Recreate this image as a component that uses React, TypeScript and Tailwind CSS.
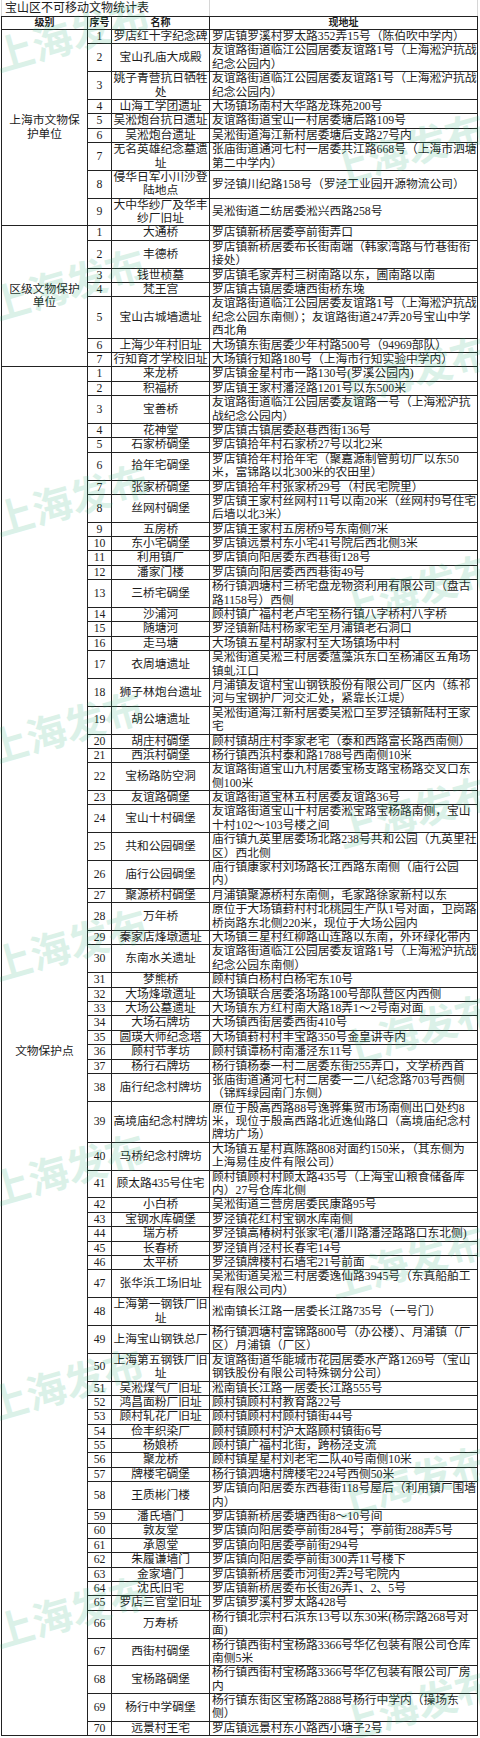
import React from "react";

type Row = [string, string];

const s1: Row[] = [
  ["罗店红十字纪念碑", "罗店镇罗溪村罗太路352弄15号（陈伯吹中学内）"],
  ["宝山孔庙大成殿", "友谊路街道临江公园居委友谊路1号（上海淞沪抗战\n纪念公园内）"],
  ["姚子青营抗日牺牲\n处", "友谊路街道临江公园居委友谊路1号（上海淞沪抗战\n纪念公园内）"],
  ["山海工学团遗址", "大场镇场南村大华路龙珠苑200号"],
  ["吴淞炮台抗日遗址", "友谊路街道宝山一村居委塘后路109号"],
  ["吴淞炮台遗址", "吴淞街道海江新村居委塘后支路27号内"],
  ["无名英雄纪念墓遗\n址", "张庙街道通河七村一居委共江路668号（上海市泗塘\n第二中学内）"],
  ["侵华日军小川沙登\n陆地点", "罗泾镇川纪路158号（罗泾工业园开源物流公司）"],
  ["大中华纱厂及华丰\n纱厂旧址", "吴淞街道二纺居委淞兴西路258号"],
];

const s2: Row[] = [
  ["大通桥", "罗店镇新桥居委亭前街弄口"],
  ["丰德桥", "罗店镇新桥居委布长街南端（韩家湾路与竹巷街衔\n接处）"],
  ["钱世桢墓", "罗店镇毛家弄村三树南路以东，圃南路以南"],
  ["梵王宫", "罗店镇古镇居委塘西街桥东堍"],
  ["宝山古城墙遗址", "友谊路街道临江公园居委友谊路1号（上海淞沪抗战\n纪念公园东南侧）；友谊路街道247弄20号宝山中学\n西北角"],
  ["上海少年村旧址", "大场镇东街居委少年村路500号（94969部队）"],
  ["行知育才学校旧址", "大场镇行知路180号（上海市行知实验中学内）"],
];

const s3: Row[] = [
  ["来龙桥", "罗店镇金星村市一路130号(罗溪公园内)"],
  ["积福桥", "罗店镇王家村潘泾路1201号以东500米"],
  ["宝善桥", "友谊路街道临江公园居委友谊路一号（上海淞沪抗\n战纪念公园内）"],
  ["花神堂", "罗店镇古镇居委赵巷西街136号"],
  ["石家桥碉堡", "罗店镇拾年村石家桥27号以北2米"],
  ["拾年宅碉堡", "罗店镇拾年村拾年宅（聚嘉源制管剪切厂以东50\n米，富锦路以北300米的农田里）"],
  ["张家桥碉堡", "罗店镇拾年村张家桥29号（村民宅院里）"],
  ["丝网村碉堡", "罗店镇王家村丝网村11号以南20米（丝网村9号住宅\n后墙以北3米）"],
  ["五房桥", "罗店镇王家村五房桥9号东南侧7米"],
  ["东小宅碉堡", "罗店镇远景村东小宅41号院后西北侧3米"],
  ["利用镇厂", "罗店镇向阳居委东西巷街128号"],
  ["潘家门楼", "罗店镇向阳居委西西巷街49号"],
  ["三桥宅碉堡", "杨行镇泗塘村三桥宅盘龙物资利用有限公司（盘古\n路1158号）西侧"],
  ["沙浦河", "顾村镇广福村老卢宅至杨行镇八字桥村八字桥"],
  ["随塘河", "罗泾镇新陆村杨家宅至月浦镇老石洞口"],
  ["走马塘", "大场镇五星村胡家村至大场镇场中村"],
  ["衣周塘遗址", "吴淞街道吴淞三村居委蕰藻浜东口至杨浦区五角场\n镇虬江口"],
  ["狮子林炮台遗址", "月浦镇友谊村宝山钢铁股份有限公司厂区内（练祁\n河与宝钢护厂河交汇处，紧靠长江堤）"],
  ["胡公塘遗址", "吴淞街道海江新村居委吴淞口至罗泾镇新陆村王家\n宅"],
  ["胡庄村碉堡", "顾村镇胡庄村李家老宅（泰和西路富长路西南侧）"],
  ["西浜村碉堡", "杨行镇西浜村泰和路1788号西南侧10米"],
  ["宝杨路防空洞", "友谊路街道宝山九村居委宝杨支路宝杨路交叉口东\n侧100米"],
  ["友谊路碉堡", "友谊路街道宝林五村居委友谊路36号"],
  ["宝山十村碉堡", "友谊路街道宝山十村居委淞宝路宝杨路南侧，宝山\n十村102～103号楼之间"],
  ["共和公园碉堡", "庙行镇九英里居委场北路238号共和公园（九英里社\n区）西北侧"],
  ["庙行公园碉堡", "庙行镇康家村刘场路长江西路东南侧（庙行公园\n内）"],
  ["聚源桥村碉堡", "月浦镇聚源桥村东南侧，毛家路徐家新村以东"],
  ["万年桥", "原位于大场镇葑村村北桃园生产队1号对面，卫岗路\n桥岗路东北侧220米，现位于大场公园内"],
  ["秦家店烽墩遗址", "大场镇三星村红柳路山连路以东南，外环绿化带内"],
  ["东南水关遗址", "友谊路街道临江公园居委友谊路1号（上海淞沪抗战\n纪念公园东南侧）"],
  ["梦熊桥", "顾村镇白杨村白杨宅东10号"],
  ["大场烽墩遗址", "大场镇联合居委洛场路100号部队营区内西侧"],
  ["大场公墓遗址", "大场镇东方红村南大路18弄1～2号南对面"],
  ["大场石牌坊", "大场镇西街居委西街410号"],
  ["圆瑛大师纪念塔", "大场镇葑村村丰宝路350号金皇讲寺内"],
  ["顾村节孝坊", "顾村镇谭杨村南潘泾东11号"],
  ["杨行石牌坊", "杨行镇杨泰一村二居委东街255弄口，文学桥西首"],
  ["庙行纪念村牌坊", "张庙街道通河七村二居委一二八纪念路703号西侧\n（锦辉绿园南门东侧）"],
  ["高境庙纪念村牌坊", "原位于殷高西路88号逸骅集贸市场南侧出口处约8\n米，现位于殷高西路北近逸仙路口（高境庙纪念村\n牌坊广场）"],
  ["马桥纪念村牌坊", "大场镇五星村真陈路808对面约150米，（其东侧为\n上海易佳皮件有限公司）"],
  ["顾太路435号住宅", "顾村镇顾村村顾太路435号（上海宝山粮食储备库\n内）27号仓库北侧"],
  ["小白桥", "吴淞街道三营房居委民康路95号"],
  ["宝钢水库碉堡", "罗泾镇花红村宝钢水库南侧"],
  ["瑞方桥", "罗泾镇高椿树村张家宅(潘川路潘泾路路口东北侧)"],
  ["长春桥", "罗泾镇肖泾村长春宅14号"],
  ["太平桥", "罗泾镇牌楼村石墙宅21号前面"],
  ["张华浜工场旧址", "吴淞街道吴淞三村居委逸仙路3945号（东真船舶工\n程有限公司内）"],
  ["上海第一钢铁厂旧\n址", "淞南镇长江路一居委长江路735号（一号门）"],
  ["上海宝山钢铁总厂", "杨行镇泗塘村富锦路800号（办公楼）、月浦镇（厂\n区）月浦镇（厂区）"],
  ["上海第五钢铁厂旧\n址", "友谊路街道华能城市花园居委水产路1269号（宝山\n钢铁股份有限公司特殊钢分公司）"],
  ["吴淞煤气厂旧址", "淞南镇长江路一居委长江路555号"],
  ["鸿昌面粉厂旧址", "顾村镇顾村村教育路22号"],
  ["顾村轧花厂旧址", "顾村镇顾村村顾村镇街44号"],
  ["俭丰织染厂", "顾村镇顾村村沪太路顾村镇街6号"],
  ["杨娘桥", "顾村镇广福村北街，跨杨泾支流"],
  ["聚龙桥", "顾村镇星星村刘老宅二队40号南侧10米"],
  ["牌楼宅碉堡", "杨行镇泗塘村牌楼宅224号西侧50米"],
  ["王质彬门楼", "罗店镇向阳居委东西巷街118号屋后（利用镇厂围墙\n内）"],
  ["潘氏墙门", "罗店镇新桥居委塘西街8～10号间"],
  ["敦友堂", "罗店镇向阳居委亭前街284号；亭前街288弄5号"],
  ["承恩堂", "罗店镇向阳居委亭前街294号"],
  ["朱履谦墙门", "罗店镇向阳居委亭前街300弄11号楼下"],
  ["金家墙门", "罗店镇新桥居委市河街2弄2号宅院内"],
  ["沈氏旧宅", "罗店镇新桥居委布长街26弄1、2、5号"],
  ["罗店三官堂旧址", "罗店镇罗溪村罗太路428号"],
  ["万寿桥", "杨行镇北宗村石浜东13号以东30米(杨宗路268号对\n面)"],
  ["西街村碉堡", "杨行镇西街村宝杨路3366号华亿包装有限公司仓库\n南侧5米"],
  ["宝杨路碉堡", "杨行镇西街村宝杨路3366号华亿包装有限公司厂房\n内"],
  ["杨行中学碉堡", "杨行镇东街区宝杨路2888号杨行中学内（操场东\n侧）"],
  ["远景村王宅", "罗店镇远景村东小路西小塘子2号"],
];

const sections: { label: string; rows: Row[] }[] = [
  { label: "上海市文物保\n护单位", rows: s1 },
  { label: "区级文物保护\n单位", rows: s2 },
  { label: "文物保护点", rows: s3 },
];

const cell = "border border-[#222] p-0 align-middle whitespace-nowrap";

function Lines({ text }: { text: string }) {
  return (
    <>
      {text.split("\n").map((l, i) => (
        <div key={i} className="h-[13.4px] leading-[13.4px] overflow-visible">
          {l}
        </div>
      ))}
    </>
  );
}

const marks = [
  "left-[-6px] top-[36px]",
  "left-[330px] top-[150px]",
  "left-[-10px] top-[285px]",
  "left-[335px] top-[372px]",
  "left-[-6px] top-[500px]",
  "left-[340px] top-[590px]",
  "left-[-12px] top-[728px]",
  "left-[338px] top-[812px]",
  "left-[-8px] top-[945px]",
  "left-[340px] top-[1030px]",
  "left-[-10px] top-[1170px]",
  "left-[330px] top-[1262px]",
  "left-[-12px] top-[1385px]",
  "left-[335px] top-[1482px]",
  "left-[-6px] top-[1612px]",
  "left-[340px] top-[1705px]",
];

export default function App() {
  return (
    <div className="relative w-[480px] h-[1738px] overflow-hidden bg-white font-['Liberation_Serif','Noto_Sans_CJK_SC',serif] text-[#1c1c1c]">
      <table className="table-fixed border-collapse w-[476px] ml-[1px] text-[11.75px] leading-[13.4px]">
        <colgroup>
          <col className="w-[86px]" />
          <col className="w-[24px]" />
          <col className="w-[98px]" />
          <col className="w-[268px]" />
        </colgroup>
        <tbody>
          <tr>
            <td
              colSpan={3}
              className="border border-[#d6d6d6] border-b-[#222] border-t-0 p-0 pl-[3px] text-left whitespace-nowrap text-[12px] align-middle"
            >
              <div className="h-[16px] leading-[16px]">宝山区不可移动文物统计表</div>
            </td>
            <td className="border border-[#d6d6d6] border-b-[#222] border-t-0 p-0"></td>
          </tr>
          <tr className="font-bold text-[10px]">
            {["级别", "序号", "名称", "现地址"].map((h) => (
              <td key={h} className={cell + " text-center"}>
                <div className="h-[12px] leading-[12px]">{h}</div>
              </td>
            ))}
          </tr>
          {sections.map((sec) =>
            sec.rows.map((r, i) => (
              <tr key={sec.label + i}>
                {i === 0 && (
                  <td rowSpan={sec.rows.length} className={cell + " text-center"}>
                    <Lines text={sec.label} />
                  </td>
                )}
                <td className={cell + " text-center"}>
                  <Lines text={String(i + 1)} />
                </td>
                <td className={cell + " text-center"}>
                  <Lines text={r[0]} />
                </td>
                <td className={cell + " text-left pl-[2px]"}>
                  <Lines text={r[1]} />
                </td>
              </tr>
            ))
          )}
        </tbody>
      </table>
      {marks.map((m) => (
        <div
          key={m}
          className={
            "pointer-events-none absolute " +
            m +
            " rotate-[-16deg] origin-left whitespace-nowrap text-[40px] leading-none font-bold font-['Noto_Sans_CJK_SC',sans-serif] text-[#2fb27a] opacity-[0.17]"
          }
        >
          上海发布
        </div>
      ))}
    </div>
  );
}
